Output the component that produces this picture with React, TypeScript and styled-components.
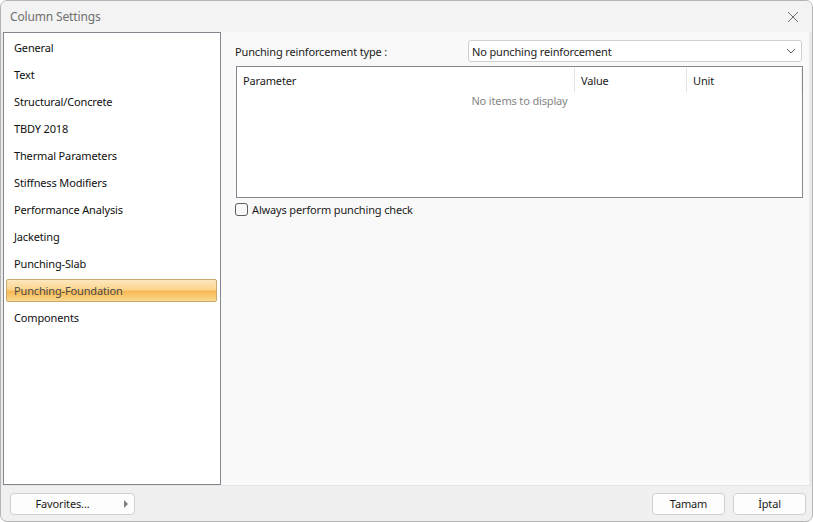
import React, { useState } from 'react';
import styled, { createGlobalStyle } from 'styled-components';

const GlobalStyle = createGlobalStyle`
  html, body {
    margin: 0;
    padding: 0;
    background: #ffffff;
  }
  body {
    font-family: 'Noto Sans', 'Open Sans', sans-serif;
    font-size: 11px;
    letter-spacing: -0.15px;
    color: #1b1b1b;
  }
`;

const Window = styled.div`
  box-sizing: border-box;
  width: 813px;
  height: 522px;
  display: flex;
  flex-direction: column;
  background: #f0f0f0;
  border: 1px solid #b4b4b4;
  border-radius: 7px;
  overflow: hidden;
`;

const TitleBar = styled.div`
  height: 31px;
  display: flex;
  align-items: center;
  justify-content: space-between;
  padding: 0 9px 0 9px;
  background: #f3f3f3;
`;

const Title = styled.span`
  font-size: 12px;
  color: #707070;
`;

const CloseButton = styled.button`
  width: 20px;
  height: 20px;
  border: none;
  background: transparent;
  padding: 0;
  display: flex;
  align-items: center;
  justify-content: center;
`;

const Body = styled.div`
  flex: 1;
  display: flex;
  padding: 0 3px 0 2px;
  min-height: 0;
  background: #ebebeb;
`;

const NavList = styled.ul`
  box-sizing: border-box;
  width: 218px;
  margin: 0;
  padding: 1px 3px 2px 2px;
  list-style: none;
  background: #ffffff;
  border: 1px solid #828790;
`;

const NavItem = styled.li`
  height: 27px;
  display: flex;
  align-items: center;
  box-sizing: border-box;
  padding: 2px 0;
  cursor: default;
`;

const NavLabel = styled.span<{ $active?: boolean }>`
  flex: 1;
  height: 23px;
  display: flex;
  align-items: center;
  box-sizing: border-box;
  padding-left: 7px;
  border-radius: 2px;
  border: 1px solid ${(p) => (p.$active ? '#c9a86b' : 'transparent')};
  color: ${(p) => (p.$active ? '#4a4a4a' : '#101010')};
  background: ${(p) =>
    p.$active
      ? 'linear-gradient(to bottom, #fde7bd 0%, #fbd58f 45%, #f7b955 55%, #fbd98c 100%)'
      : 'transparent'};
`;

const ContentPanel = styled.div`
  flex: 1;
  display: flex;
  flex-direction: column;
  background: #f9f9f9;
  padding: 8px 6px 0 14px;
`;

const FieldRow = styled.div`
  display: flex;
  align-items: center;
  justify-content: space-between;
  height: 22px;
`;

const FieldLabel = styled.span`
  color: #1b1b1b;
`;

const Select = styled.div`
  box-sizing: border-box;
  width: 334px;
  height: 22px;
  margin-right: 1px;
  display: flex;
  align-items: center;
  justify-content: space-between;
  padding: 0 5px 0 3px;
  background: #ffffff;
  border: 1px solid #cfcfcf;
  border-radius: 3px;
`;

const Grid = styled.div`
  box-sizing: border-box;
  margin: 4px 0 0 1px;
  height: 132px;
  background: #ffffff;
  border: 1px solid #828790;
  display: flex;
  flex-direction: column;
`;

const GridHeader = styled.div`
  display: grid;
  grid-template-columns: 338px 112px 1fr;
  height: 25px;
`;

const HeaderCell = styled.div<{ $last?: boolean }>`
  display: flex;
  align-items: center;
  padding-left: 6px;
  margin: 1px 0 0;
  border-right: 1px solid ${(p) => (p.$last ? '#f0f0f0' : '#e3e3e3')};
`;

const EmptyText = styled.div`
  text-align: center;
  color: #858585;
  margin-top: 1px;
`;

const CheckRow = styled.label`
  display: flex;
  align-items: center;
  gap: 4px;
  margin-top: 4px;
`;

const CheckBox = styled.span`
  box-sizing: border-box;
  width: 13px;
  height: 13px;
  border: 1px solid #5f5f5f;
  border-radius: 3px;
  background: #f9f9f9;
`;

const Footer = styled.div`
  height: 35px;
  display: flex;
  align-items: center;
  justify-content: space-between;
  padding: 0 6px 0 9px;
  border-top: 1px solid #e6e6e6;
`;

const Button = styled.button<{ $wide?: boolean }>`
  box-sizing: border-box;
  height: 22px;
  width: ${(p) => (p.$wide ? '125px' : '73px')};
  position: relative;
  display: flex;
  align-items: center;
  justify-content: center;
  font-family: inherit;
  font-size: 11px;
  letter-spacing: -0.15px;
  color: #1b1b1b;
  background: #fdfdfd;
  border: 1px solid #d0d0d0;
  border-radius: 4px;
  padding: 0 ${(p) => (p.$wide ? '20px' : '0')} 0 0;
`;

const ButtonGroup = styled.div`
  display: flex;
  gap: 8px;
`;

const Arrow = styled.span`
  position: absolute;
  right: 6px;
  top: 6px;
  width: 0;
  height: 0;
  border-left: 4px solid #808080;
  border-top: 4px solid transparent;
  border-bottom: 4px solid transparent;
`;

const navItems = [
  'General',
  'Text',
  'Structural/Concrete',
  'TBDY 2018',
  'Thermal Parameters',
  'Stiffness Modifiers',
  'Performance Analysis',
  'Jacketing',
  'Punching-Slab',
  'Punching-Foundation',
  'Components',
];

const App = () => {
  const [active, setActive] = useState('Punching-Foundation');

  return (
    <>
      <GlobalStyle />
      <Window>
        <TitleBar>
          <Title>Column Settings</Title>
          <CloseButton aria-label="Close">
            <svg width="12" height="12" viewBox="0 0 12 12">
              <path d="M1 1L11 11M11 1L1 11" stroke="#6e6e6e" strokeWidth="1" />
            </svg>
          </CloseButton>
        </TitleBar>
        <Body>
          <NavList>
            {navItems.map((item) => (
              <NavItem key={item} onClick={() => setActive(item)}>
                <NavLabel $active={item === active}>{item}</NavLabel>
              </NavItem>
            ))}
          </NavList>
          <ContentPanel>
            <FieldRow>
              <FieldLabel>Punching reinforcement type :</FieldLabel>
              <Select>
                <span>No punching reinforcement</span>
                <svg width="10" height="6" viewBox="0 0 10 6">
                  <path d="M1 1L5 5L9 1" fill="none" stroke="#606060" strokeWidth="1" />
                </svg>
              </Select>
            </FieldRow>
            <Grid>
              <GridHeader>
                <HeaderCell>Parameter</HeaderCell>
                <HeaderCell>Value</HeaderCell>
                <HeaderCell $last>Unit</HeaderCell>
              </GridHeader>
              <EmptyText>No items to display</EmptyText>
            </Grid>
            <CheckRow>
              <CheckBox />
              <span>Always perform punching check</span>
            </CheckRow>
          </ContentPanel>
        </Body>
        <Footer>
          <Button $wide>
            Favorites...
            <Arrow />
          </Button>
          <ButtonGroup>
            <Button>Tamam</Button>
            <Button>İptal</Button>
          </ButtonGroup>
        </Footer>
      </Window>
    </>
  );
};

export default App;
